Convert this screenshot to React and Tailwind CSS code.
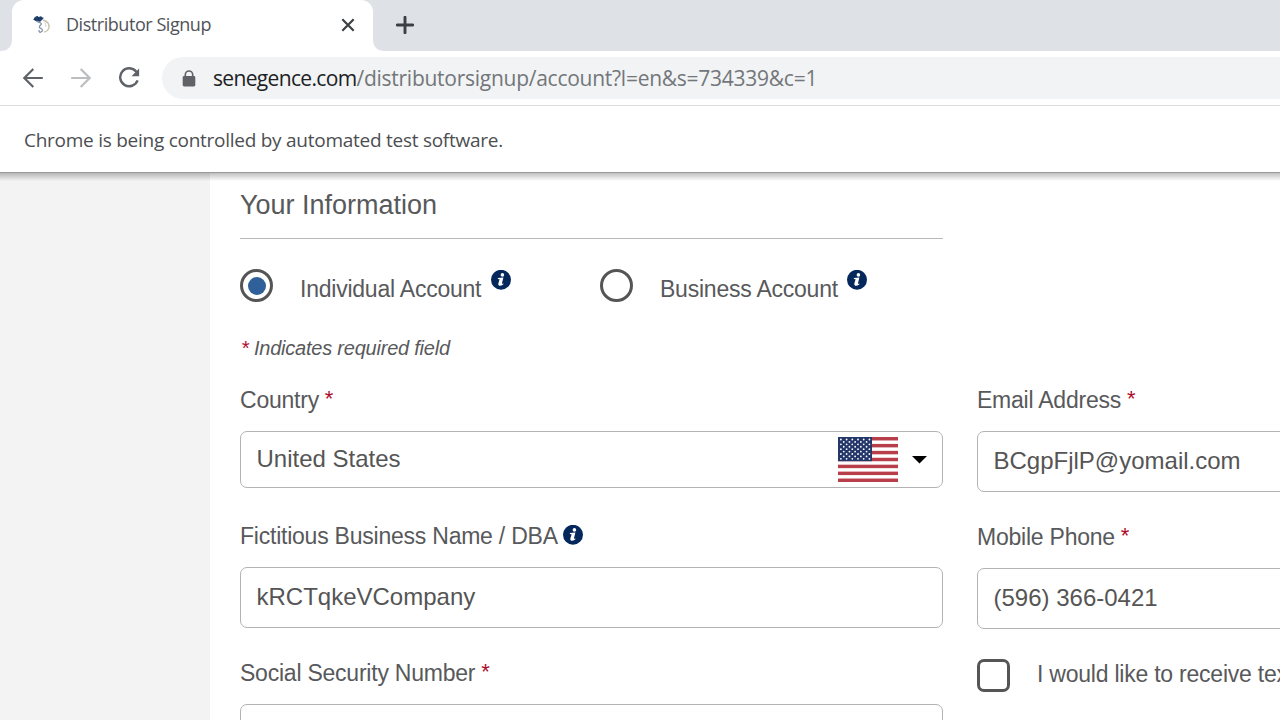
function InfoIcon() {
  return (
    <svg className="block size-5 shrink-0" viewBox="0 0 20 20" aria-hidden="true">
      <circle cx="10" cy="9.8" r="10" fill="#04275c" />
      <circle cx="11.4" cy="4.9" r="1.8" fill="#fff" />
      <path d="M6.9 8 L12.4 7.6 L10.9 13.4 Q10.9 14.2 12.5 13.2 L12.2 14.4 Q10.1 16.1 8.2 15.8 Q6.8 15.2 7.4 13.3 L8.6 9.3 L6.8 9.1 Z" fill="#fff" />
    </svg>
  );
}

function Flag() {
  const stars = [];
  for (let r = 0; r < 9; r++) {
    const n = r % 2 === 0 ? 6 : 5;
    for (let c = 0; c < n; c++) {
      stars.push(
        <circle key={r + "-" + c} cx={2.9 + c * 5.7 + (r % 2 ? 2.85 : 0)} cy={2.5 + r * 2.42} r="0.9" fill="#fff" />
      );
    }
  }
  return (
    <svg className="block h-[45px] w-[60px]" viewBox="0 0 60 45" aria-hidden="true">
      <rect width="60" height="45" fill="#fff" />
      {[0, 1, 2, 3, 4, 5, 6].map((i) => (
        <rect key={i} y={i * 6.923} width="60" height="3.462" fill="#b83e49" />
      ))}
      <rect width="34" height="24.2" fill="#24376a" />
      {stars}
    </svg>
  );
}

function Label({ children, required }) {
  return (
    <div className="flex h-[26px] items-center whitespace-pre text-[23px] leading-[26px] tracking-[-0.23px] text-[#58595b]">
      {children}
      {required && <span className="pb-[2px] text-[22px] text-[#b00b2c]"> *</span>}
    </div>
  );
}

function Field({ children, className = "" }) {
  return (
    <div className={"flex items-center rounded-[7px] border border-[#b3b3b3] bg-white pb-[2px] pl-[15.5px] text-[24px] leading-7 text-[#555] " + className}>
      {children}
    </div>
  );
}

function Browser() {
  return (
    <header className="font-['Open_Sans',sans-serif]">
      <div className="flex h-[51px] bg-[#dee1e6]">
        <svg className="mt-auto h-3 w-3 shrink-0" viewBox="0 0 12 12"><path d="M12 0 V12 H0 Q12 12 12 0Z" fill="#fff" /></svg>
        <div className="flex w-[361px] items-center rounded-t-xl bg-white pb-[2px] pl-[20px]">
          <svg className="h-5 w-5 shrink-0" viewBox="0 0 20 20" fill="none">
            <path d="M2 3 Q4 0 7 2 Q10 0 11 4 L9 6 Q5 8 2 5Z" fill="#244674" />
            <path d="M1.5 4.5 L11.5 3 M5 1 L8 7" stroke="#17365f" strokeWidth="1" />
            <path d="M5 6.5 Q11 8 8.5 10 Q6 13 9 13.5 Q12 15 9 17 Q7 18 7 15" stroke="#8196ae" strokeWidth="1.3" />
            <path d="M11 5 Q18 7 17 13 Q15 17 12 17" stroke="#c9c3ae" strokeWidth="1.4" />
            <path d="M13 7 L14 12" stroke="#e0d8c5" />
          </svg>
          <span className="mb-[2px] ml-[14px] whitespace-nowrap text-[18px] leading-6 tracking-[-0.45px] text-[#505358]">Distributor Signup</span>
          <svg className="mr-[18px] ml-auto h-[14px] w-[14px]" viewBox="0 0 14 14"><path d="M1.3 1.3 L12.7 12.7 M12.7 1.3 L1.3 12.7" stroke="#3c4043" strokeWidth="2.2" /></svg>
        </div>
        <svg className="mt-auto h-3 w-3 shrink-0" viewBox="0 0 12 12"><path d="M0 0 V12 H12 Q0 12 0 0Z" fill="#fff" /></svg>
        <svg className="mt-4 ml-[11px] h-[18px] w-[18px]" viewBox="0 0 18 18"><path d="M9 1.2 V16.8 M1.2 9 H16.8" stroke="#3c4043" strokeWidth="2.9" strokeLinecap="round" /></svg>
      </div>
      <div className="flex h-[55px] items-center border-b border-[#dadce0] bg-white pl-[22px]">
        <svg className="mb-px h-[22px] w-[22px] shrink-0" viewBox="0 0 22 22" fill="none" stroke="#5f6368" strokeWidth="2.2"><path d="M20.8 11 H3 M11.3 2 L2.3 11 L11.3 20" /></svg>
        <svg className="mb-px ml-[26px] h-[22px] w-[22px] shrink-0" viewBox="0 0 22 22" fill="none" stroke="#bbbdbf" strokeWidth="2.2"><path d="M1.2 11 H19 M10.7 2 L19.7 11 L10.7 20" /></svg>
        <svg className="ml-[26px] h-[22px] w-[22px] shrink-0" viewBox="0 0 22 22" fill="none"><path d="M18.5 5 A9 9 0 1 0 19.6 13.4" stroke="#5f6368" strokeWidth="2.4" /><path d="M21.1 1.6 V9.2 H13.5Z" fill="#5f6368" /></svg>
        <div className="ml-[22px] flex h-[42px] flex-1 items-center rounded-l-full bg-[#f1f3f4] pl-5">
          <svg className="h-[17px] w-[14px] shrink-0" viewBox="0 0 14 17"><rect x="0.7" y="6" width="12.6" height="10.5" rx="1.4" fill="#5f6368" /><path d="M3.3 7 V4.7 A3.6 3.6 0 0 1 10.7 4.7 V7" fill="none" stroke="#5f6368" strokeWidth="1.6" /></svg>
          <span className="ml-[17px] whitespace-nowrap text-[21px] leading-7 tracking-[-0.26px] text-[#73767a]"><span className="tracking-[-0.66px] text-[#202124]">senegence.com</span>/distributorsignup/account?l=en&amp;s=734339&amp;c=1</span>
        </div>
      </div>
      <div className="flex h-[66px] items-center bg-white pl-6 text-[19px] tracking-[-0.26px] text-[#4c4e51]">
        <span className="mt-[3px] whitespace-nowrap">Chrome is being controlled by automated test software.</span>
      </div>
    </header>
  );
}

export default function App() {
  return (
    <div className="flex h-[720px] w-[1280px] flex-col overflow-hidden bg-white font-['Liberation_Sans',Arial,sans-serif] text-[#58595b]">
      <Browser />
      <div className="relative flex min-h-0 flex-1">
        <div className="absolute inset-x-0 top-0 h-[9px] border-t border-[#999] bg-linear-to-b from-black/25 to-transparent" />
        <aside className="w-[210px] shrink-0 bg-[#f3f3f3]" />
        <main className="w-[1070px] shrink-0 pl-[30px]">
          <h1 className="h-[67px] w-[703px] border-b border-[#b8b8b8] pt-[17px] text-[27px] leading-8">Your Information</h1>
          <div className="mt-[30px] flex h-[33px]">
            <div className="flex w-[360px]">
              <span className="flex size-[33px] shrink-0 items-center justify-center rounded-full border-3 border-[#555]"><span className="size-[18px] rounded-full bg-[#2f6099]" /></span>
              <span className="mt-[7px] ml-[27px] text-[23px] leading-[26px] tracking-[-0.23px] whitespace-nowrap">Individual Account</span>
              <span className="mt-px ml-[10px]"><InfoIcon /></span>
            </div>
            <div className="flex">
              <span className="size-[33px] shrink-0 rounded-full border-3 border-[#555]" />
              <span className="mt-[7px] ml-[27px] text-[23px] leading-[26px] tracking-[-0.23px] whitespace-nowrap">Business Account</span>
              <span className="mt-px ml-[9px]"><InfoIcon /></span>
            </div>
          </div>
          <p className="mt-[34px] h-6 pl-px text-[20px] leading-6 tracking-[-0.22px] italic"><span className="text-[#b00b2c]">*</span> Indicates required field</p>
          <div className="mt-[27px] flex gap-[34px]">
            <section className="w-[703px] shrink-0">
              <Label required>Country</Label>
              <Field className="mt-[18px] h-[57px] pr-[15px]">
                United States
                <span className="mt-[2px] mr-[14px] ml-auto"><Flag /></span>
                <svg className="mt-[3px] h-2 w-[15px]" viewBox="0 0 15 8"><path d="M0 0 H15 L7.5 7.5Z" fill="#000" /></svg>
              </Field>
              <div className="mt-[35px] flex gap-[5px]">
                <Label>Fictitious Business Name / DBA</Label>
                <span className="mt-[2px]"><InfoIcon /></span>
              </div>
              <Field className="mt-[18px] h-[61px]">kRCTqkeVCompany</Field>
              <div className="mt-8"><Label required>Social Security Number</Label></div>
              <Field className="mt-[18px] h-[61px]" />
            </section>
            <section className="w-[703px] shrink-0">
              <Label required>Email Address</Label>
              <Field className="mt-[18px] h-[61px]">BCgpFjlP@yomail.com</Field>
              <div className="mt-8"><Label required>Mobile Phone</Label></div>
              <Field className="mt-[18px] h-[61px]">(596) 366-0421</Field>
              <div className="mt-[30px] flex">
                <span className="size-[33px] shrink-0 rounded-[7px] border-3 border-[#555]" />
                <span className="mt-[2px] ml-[27px] text-[23px] leading-[26px] tracking-[-0.23px] whitespace-nowrap">I would like to receive text</span>
              </div>
            </section>
          </div>
        </main>
      </div>
    </div>
  );
}
